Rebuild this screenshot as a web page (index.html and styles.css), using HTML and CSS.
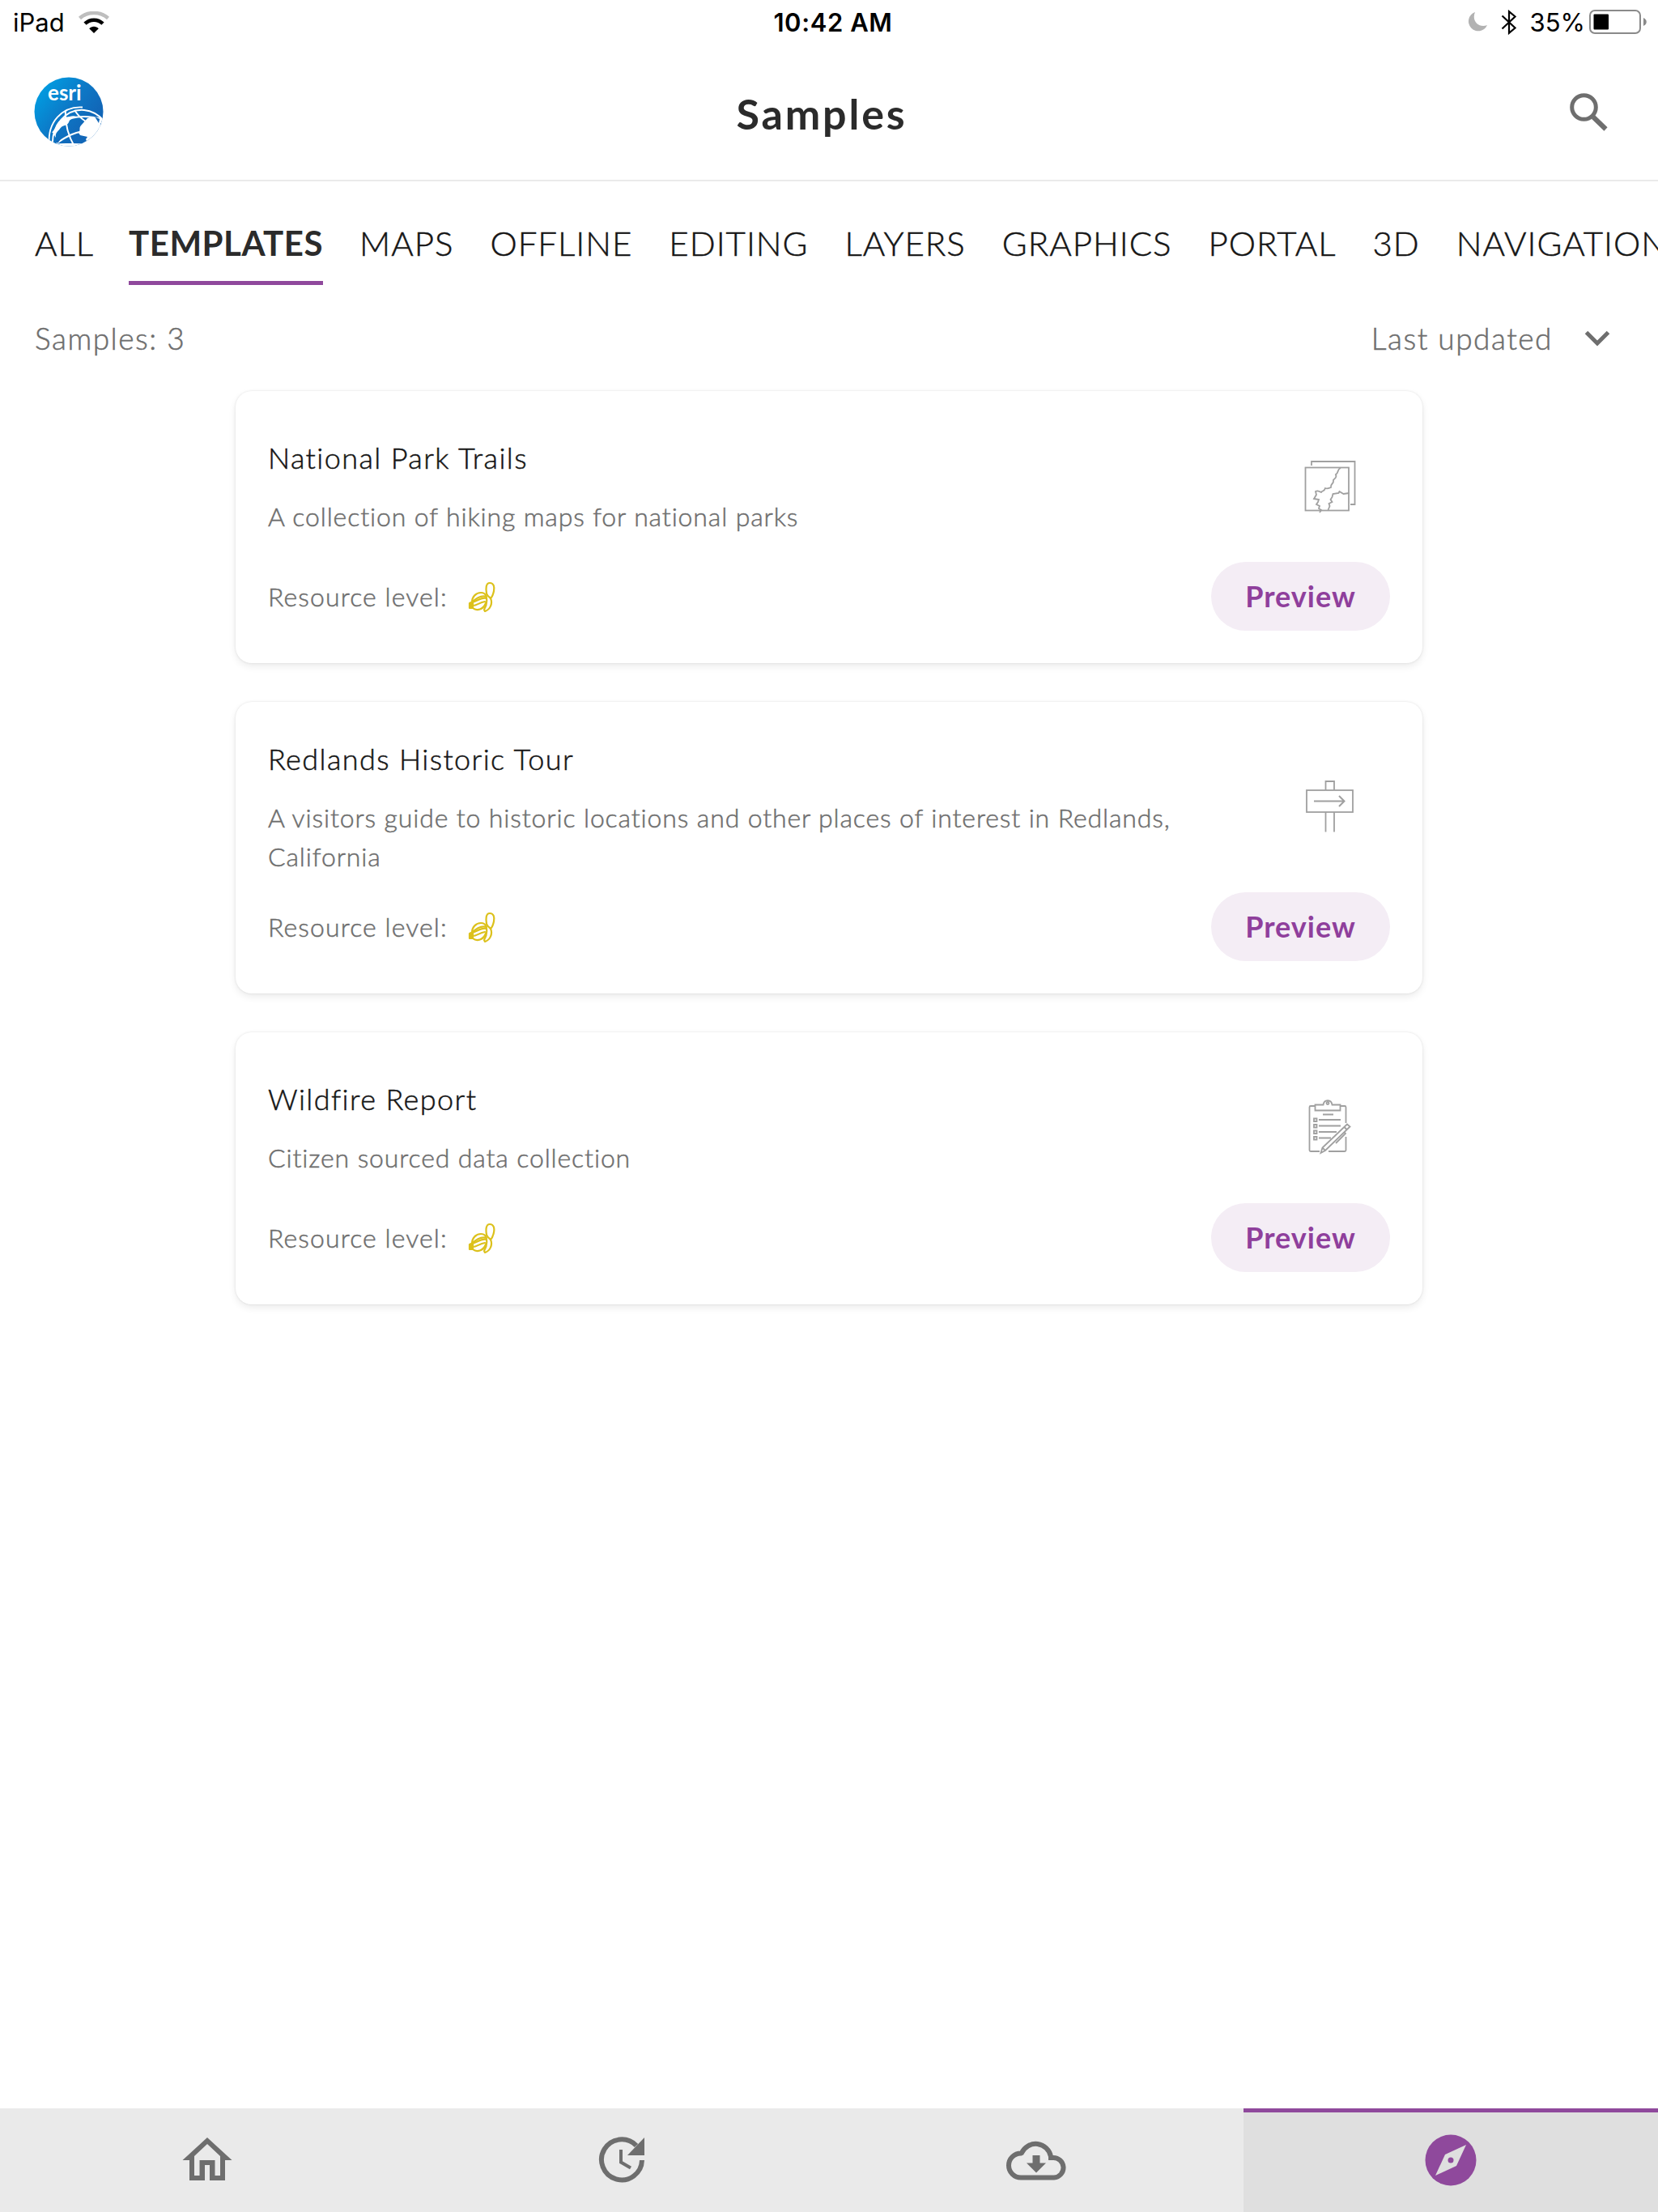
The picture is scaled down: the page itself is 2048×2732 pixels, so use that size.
FILE: index.html
```html
<!DOCTYPE html>
<html lang="en">
<head>
    <meta charset="UTF-8" />
    <meta name="viewport" content="width=device-width, initial-scale=1.0" />
    <title>Samples</title>
    <link rel="stylesheet" href="styles.css">
</head>
<body>
    <svg class="defs" width="0" height="0">
        <symbol id="bananas" viewBox="0 0 34 38">
            <g fill="none" stroke="#dcc11c" stroke-width="2.200" stroke-linejoin="round" stroke-linecap="round">
                <path d="M23 15C22 9 22 2 27 2c5 0 6 5 5 10-1 5-2 7-4 9" />
                <path d="M23 15c1 3 3 4 5 6 3 7-1 14-7 16l-1-2c3-5 4-8 3-14" />
                <path d="M5 26c0-7 5-12 11-12 4 0 6 2 7 5-6-2-12 1-18 7" />
                <path d="M5 26c5-1 12-7 18-5M6 30c5 0 8-4 15-5M6 33c5 4 13 2 16-6" />
                <path d="M2 27l4-2v8H2z" fill="#dcc11c" />
            </g>
        </symbol>
    </svg>

    <div class="status-bar">
        <div class="status-left">
            <span class="device">iPad</span>
            <svg class="wifi" width="38" height="27" viewBox="0 0 38 27">
                <path d="M1.5 8.5C11 -.2 27 -.2 36.500 8.500" fill="none" stroke="#bebebe" stroke-width="4.500" />
                <path d="M8 15.200C14 9.200 24 9.200 30 15.200" fill="none" stroke="#000" stroke-width="4.500" />
                <path d="M13.200 21.200C16 17.800 22 17.800 24.800 21.200L19 27z" />
            </svg>
        </div>
        <span class="clock">10:42 AM</span>
        <div class="status-right">
            <svg width="24" height="24" viewBox="0 0 24 24"><path d="M9 0A12 12 0 1 0 24 16C15 20 4 12 9 0z" fill="#b2b2b2" /></svg>
            <svg class="bluetooth" width="20" height="31" viewBox="0 0 20 31"><path d="M1.500 7.500L17.500 22.500 10 28.800V2.200L17.500 8.500 1.500 23.500" fill="none" stroke="#000" stroke-width="2.200" /></svg>
            <span class="percent">35%</span>
            <svg class="battery" width="71" height="30" viewBox="0 0 71 30">
                <rect x="1" y="1" width="62" height="28" rx="6" fill="none" stroke="#8a8a8a" stroke-width="2" />
                <rect x="5.500" y="5.500" width="18.500" height="19" rx="1" />
                <path d="M67 10c5 2 5 8 0 10z" fill="#8a8a8a" />
            </svg>
        </div>
    </div>

    <header class="header">
        <svg class="logo" width="86" height="86" viewBox="0 0 86 86">
            <defs>
                <linearGradient id="sky" x1="0.05" y1="0.15" x2="0.75" y2="0.7">
                    <stop offset="0" stop-color="#009fe3" />
                    <stop offset="0.6" stop-color="#0d78c6" />
                    <stop offset="1" stop-color="#1167b8" />
                </linearGradient>
                <clipPath id="disc"><circle cx="43" cy="43" r="42.500" /></clipPath>
            </defs>
            <circle cx="43" cy="43" r="42.500" fill="url(#sky)" />
            <text class="logo-text" x="17" y="28.500">esri</text>
            <g clip-path="url(#disc)">
                <g fill="none" stroke="#fff" stroke-width="2">
                    <path d="M19 84C16 56 35 36 60 37.500" stroke-width="1.800" />
                    <path d="M23 86C21 60 40 39 62 41c10 1 18 6 24 13" />
                    <path d="M23 69C38 49 55 47 74 50M28 82C42 72 50 69 60 67" />
                    <path d="M39 41C38 58 43 74 50 86M50 41C58 53 65 57 84 63" />
                </g>
                <path d="M26 64c3-10 9-14 18-15 3-1 6-1 9 0-5 2-9 3-10 7-2 5-8 3-11 8-3 4-6 5-5 11-3-4-3-7-1-11z" fill="#fff" />
                <path d="M66 51c7-3 13-2 20 1l-4 6v16L68 86l-4-9 2-3-9-2-2-3c3-3 0-6 3-9z" fill="#fff" />
                <path d="M75 49l6 3-1 5z" fill="#1167b8" />
                <path d="M24 83c14-2 28 0 42-1l-8 5H25z" fill="#fff" />
                <path d="M29 82l4-5-6 2z" fill="#1167b8" />
            </g>
        </svg>
        <h1>Samples</h1>
        <svg class="search" width="47" height="47" viewBox="0 0 47 47" fill="none" stroke="#6e6e6e">
            <circle cx="17.500" cy="17.500" r="14.800" stroke-width="5" />
            <path d="M29 29.500L44.500 44.500" stroke-width="6" />
        </svg>
    </header>

    <nav class="tabs">
        <span class="tab">ALL</span>
        <span class="tab active">TEMPLATES</span>
        <span class="tab">MAPS</span>
        <span class="tab">OFFLINE</span>
        <span class="tab">EDITING</span>
        <span class="tab">LAYERS</span>
        <span class="tab">GRAPHICS</span>
        <span class="tab">PORTAL</span>
        <span class="tab">3D</span>
        <span class="tab">NAVIGATION</span>
    </nav>

    <div class="sort-row">
        <span class="count">Samples: 3</span>
        <span class="sort">Last updated
            <svg width="32" height="20" viewBox="0 0 32 20"><path d="M2.500 2.500L16 16 29.500 2.500" fill="none" stroke="#6e6e6e" stroke-width="5" /></svg>
        </span>
    </div>

    <main class="cards">
        <section class="card">
            <div class="card-main">
                <div class="card-text">
                    <h2>National Park Trails</h2>
                    <p>A collection of hiking maps for national parks</p>
                </div>
                <svg class="card-icon" width="72" height="72" viewBox="0 0 72 72" fill="none" stroke="#a0a0a0" stroke-width="1.800">
                    <rect x="5.500" y="13.500" width="53.500" height="53" />
                    <path d="M13 11V6h53.500v53H61" />
                    <path d="M49 14c-5 2-2 6-6 8 2 4-2 5-3 7 1 5-4 4-3 9-3 1-4 2-7 1-1 4-4 3-5 5-3-1-4-3-7-1l1 4-3 5 6 1-1 3-2 3 4 2-1 3 3 2-2 3" />
                    <path d="M33.500 66l2-5-1-3 4-2-2-3 2-3 1-4 7-1 1-2 5 3 7-1" />
                </svg>
            </div>
            <div class="card-foot">
                <span class="level">Resource level:</span>
                <svg class="bananas" width="34" height="38"><use href="#bananas" /></svg>
                <button>Preview</button>
            </div>
        </section>

        <section class="card">
            <div class="card-main">
                <div class="card-text">
                    <h2>Redlands Historic Tour</h2>
                    <p>A visitors guide to historic locations and other places of interest in Redlands, California</p>
                </div>
                <svg class="card-icon" width="72" height="72" viewBox="0 0 72 72" fill="none" stroke="#a0a0a0" stroke-width="1.800">
                    <rect x="7" y="16" width="57" height="27" />
                    <path d="M30.500 16V5h10.500v11M30.500 43v24.500M41 43v24.500" />
                    <path d="M16 29.500h37M47 23l6.500 6.500L47 36" stroke-width="2" />
                </svg>
            </div>
            <div class="card-foot">
                <span class="level">Resource level:</span>
                <svg class="bananas" width="34" height="38"><use href="#bananas" /></svg>
                <button>Preview</button>
            </div>
        </section>

        <section class="card">
            <div class="card-main">
                <div class="card-text">
                    <h2>Wildfire Report</h2>
                    <p>Citizen sourced data collection</p>
                </div>
                <svg class="card-icon" width="72" height="72" viewBox="0 0 72 72" fill="none" stroke="#a0a0a0" stroke-width="1.800">
                    <path d="M17 10h-5q-1.500 0-1.500 1.500v53q0 1.500 1.500 1.500h11M34 66h20q1.500 0 1.500-1.500V48M55.500 31V11.500q0-1.500-1.500-1.500h-5" />
                    <path d="M17.500 15.500V8.500h10c1-7 10-7 11 0h10v7z" />
                    <circle cx="33" cy="6.500" r="1.500" />
                    <path d="M27 20.500h13M22 27h27M22 34.500h27M22 42h22M22 49.500h15" />
                    <path d="M16 25.500h3.500v3.500H16zM16 33h3.500v3.500H16zM16 40.500h3.500v3.500H16zM16 48h3.500v3.500H16z" />
                    <path d="M24.500 68l2-6.500L57 32.500l3.500 3L30 65zM26.500 61.500l3.500 3.500M53.500 36l3.500 3.500M43 56l12-12-1.500-1.500" />
                </svg>
            </div>
            <div class="card-foot">
                <span class="level">Resource level:</span>
                <svg class="bananas" width="34" height="38"><use href="#bananas" /></svg>
                <button>Preview</button>
            </div>
        </section>
    </main>

    <footer class="bottom-nav">
        <div class="nav-item">
            <svg width="64" height="64" viewBox="0 0 64 64" fill="#6e6e6e">
                <path fill-rule="evenodd" d="M32 4L62.500 32H54v25H35V38h-6v19H10V32H1.500zM32 12L16 27v24h6.500V32h19v19H48V27z" />
            </svg>
        </div>
        <div class="nav-item">
            <svg width="64" height="64" viewBox="0 0 64 64">
                <path d="M50 14A25 25 0 1 0 57 32" fill="none" stroke="#6e6e6e" stroke-width="6" />
                <path d="M60 4v22H39z" fill="#6e6e6e" />
                <path d="M31 19v15.500l12 7" fill="none" stroke="#6e6e6e" stroke-width="4" />
            </svg>
        </div>
        <div class="nav-item">
            <svg width="76" height="64" viewBox="0 0 76 64">
                <path d="M19 53.500A15 15 0 0 1 19 23.500L20 23A19 19 0 0 1 56 27.500V29h2.500A12.200 12.200 0 0 1 60 53.500z" fill="none" stroke="#6e6e6e" stroke-width="6" />
                <path d="M33.500 26h9v9.500H50L38 47.500 26 35.500h7.500z" fill="#6e6e6e" />
            </svg>
        </div>
        <div class="nav-item current">
            <svg width="64" height="64" viewBox="0 0 64 64">
                <circle cx="32" cy="32" r="31.500" fill="#8f499c" />
                <path d="M51 13L39 39 13 51 25 25z" fill="#dfdfdf" />
                <circle cx="32" cy="32" r="3.500" fill="#8f499c" />
            </svg>
        </div>
    </footer>
</body>
</html>
```
FILE: styles.css
```css
* { margin: 0; padding: 0; box-sizing: border-box; }
body {
    background: #fff;
    color: #151515;
    font-family: Lato, 'Open Sans', sans-serif;
    font-weight: 300;
    display: flex;
    flex-direction: column;
    height: 2732px;
    overflow: hidden;
}
svg { display: block; flex-shrink: 0; }
.defs { display: none; }

.status-bar {
    display: grid;
    grid-template-columns: 1fr auto 1fr;
    align-items: center;
    height: 54px;
    padding: 0 14px 0 16px;
    font-family: Inter, sans-serif;
    font-size: 31px;
    font-weight: 400;
    color: #000;
}
.status-left, .status-right {
    display: flex;
    align-items: center;
}
.status-right { justify-content: flex-end; }
.wifi { margin-left: 17px; }
.clock {
    font-weight: 600;
    letter-spacing: 0.6px;
    padding-left: 8px;
}
.bluetooth { margin-left: 17px; }
.percent { margin-left: 16px; }
.battery { margin-left: 5px; }

.header {
    display: flex;
    align-items: center;
    justify-content: space-between;
    height: 170px;
    padding: 0 62px 0 42px;
    border-bottom: 2px solid #eaeaea;
}
.logo-text {
    font: 700 26px Lato, sans-serif;
    fill: #fff;
}
h1 {
    font-size: 52px;
    font-weight: 700;
    letter-spacing: 2.8px;
    color: #2b2b2b;
    padding: 3px 37px 0 0;
}

.tabs {
    display: flex;
    gap: 45px;
    height: 128px;
    padding: 48px 0 0 43px;
    font-size: 42px;
    line-height: 56px;
    letter-spacing: 1px;
    white-space: nowrap;
    -webkit-text-stroke: 0.5px;
}
.tab {
    flex-shrink: 0;
    height: 80px;
}
.tab.active {
    margin-left: -2px;
    font-weight: 700;
    letter-spacing: 0.5px;
    color: #2b2b2b;
    border-bottom: 5px solid #8f499c;
    -webkit-text-stroke: 0;
}

.sort-row {
    display: flex;
    align-items: center;
    justify-content: space-between;
    height: 131px;
    padding: 0 59px 0 43px;
    font-size: 37px;
    letter-spacing: 1.5px;
    color: #6e6e6e;
    -webkit-text-stroke: 0.5px;
}
.sort {
    display: flex;
    align-items: center;
    gap: 39px;
}

.cards {
    display: flex;
    flex-direction: column;
    align-items: center;
    gap: 48px;
    flex: 1;
}
.card {
    display: flex;
    flex-direction: column;
    width: 1466px;
    height: 336px;
    padding: 0 40px 40px;
    border-radius: 20px;
    background: #fff;
    box-shadow: 0 0 3px rgba(0, 0, 0, 0.1), 0 4px 10px rgba(0, 0, 0, 0.08);
}
.card:nth-child(2) { height: 360px; }
.card-main {
    display: flex;
    align-items: center;
    justify-content: space-between;
    flex: 1;
    padding: 25px 38px 0 0;
}
.card-text {
    width: 1130px;
    -webkit-text-stroke: 0.5px;
}
.card-icon { margin-bottom: 3px; }
h2 {
    font-size: 36px;
    font-weight: 300;
    line-height: 48px;
    letter-spacing: 1.4px;
    margin-bottom: 25px;
}
.card p {
    font-size: 32px;
    line-height: 48px;
    letter-spacing: 0.87px;
    color: #6e6e6e;
}
.card-foot {
    display: flex;
    align-items: center;
    height: 85px;
}
.level {
    width: 218px;
    font-size: 32px;
    letter-spacing: 1.1px;
    white-space: nowrap;
    color: #6e6e6e;
    -webkit-text-stroke: 0.5px;
}
.bananas { margin-left: 29px; }
button {
    width: 221px;
    height: 85px;
    margin-left: auto;
    padding-bottom: 2px;
    border: none;
    border-radius: 43px;
    background: #f4edf5;
    color: #8f3f9c;
    font-family: inherit;
    font-size: 36px;
    font-weight: 700;
    letter-spacing: 1px;
}

.bottom-nav {
    display: grid;
    grid-template-columns: repeat(4, 1fr);
    height: 128px;
    background: #eaeaea;
}
.nav-item {
    display: flex;
    align-items: center;
    justify-content: center;
}
.nav-item.current {
    background: #dfdfdf;
    box-shadow: inset 0 5px #8f499c;
}
```
